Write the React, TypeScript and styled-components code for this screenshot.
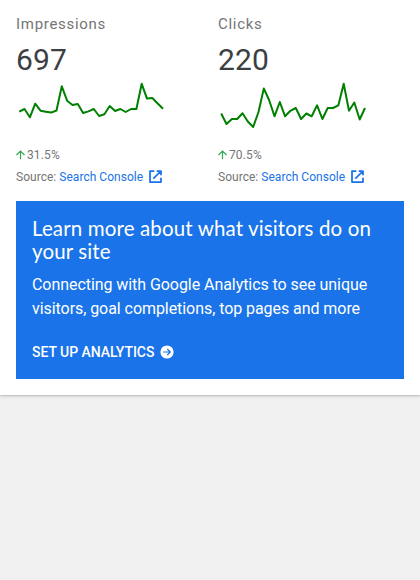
import React from 'react';
import styled, { createGlobalStyle } from 'styled-components';

const GlobalStyle = createGlobalStyle`
  body {
    margin: 0;
    background: #f0f0f0;
    font-family: Roboto, sans-serif;
  }
  *, *::before, *::after { box-sizing: border-box; }
`;

const Page = styled.div`
  min-height: 100vh;
  background: #f0f0f0;
`;

const Widget = styled.main`
  height: 395px;
  padding: 0 16px;
  background: #fff;
  box-shadow: 0 1px 0 rgba(0, 0, 0, 0.06), 0 1px 3px rgba(0, 0, 0, 0.2);
`;

const Metrics = styled.div`
  display: grid;
  grid-template-columns: 202px 1fr;
  height: 201px;
`;

const MetricColumn = styled.section`
  display: flex;
  flex-direction: column;
  padding-top: 14px;
  color: #757575;
`;

const MetricName = styled.h2`
  margin: 0;
  font-size: 15px;
  font-weight: 400;
  line-height: 20px;
  letter-spacing: 0.7px;
`;

const MetricValue = styled.div`
  margin-top: 9px;
  font-size: 30px;
  line-height: 33px;
  letter-spacing: 0.15px;
  color: #3c4043;
`;

const Sparkline = styled.svg`
  display: block;
  width: 150px;
  height: 54px;
`;

const Change = styled.div`
  display: flex;
  align-items: center;
  gap: 2px;
  margin-top: 17px;
  font-size: 12px;
  line-height: 16px;
  letter-spacing: 0.12px;
`;

const Source = styled.div`
  display: flex;
  align-items: center;
  margin-top: 5px;
  font-size: 12px;
  line-height: 16px;
  letter-spacing: 0.03px;
  white-space: pre;
`;

const SourceLink = styled.a`
  display: inline-flex;
  align-items: center;
  gap: 4px;
  color: #1a73e8;
  text-decoration: none;
`;

const Icon = styled.svg`
  display: block;
  flex: none;
  fill: currentColor;
`;

const Promo = styled.section`
  height: 178px;
  padding: 16px;
  background: #1a73e8;
  color: #fff;
`;

const PromoTitle = styled.h3`
  margin: 0;
  font-family: Lato, sans-serif;
  font-size: 20.5px;
  font-weight: 400;
  line-height: 23px;
  letter-spacing: 0.13px;
`;

const PromoText = styled.p`
  margin: 10px 0 0;
  font-size: 16px;
  line-height: 24px;
  letter-spacing: -0.06px;
  white-space: nowrap;
`;

const PromoAction = styled.a`
  display: flex;
  align-items: center;
  gap: 6px;
  margin-top: 22px;
  font-size: 14px;
  font-weight: 500;
  line-height: 18px;
  letter-spacing: -0.04px;
  color: #fff;
`;

interface Metric {
  name: string;
  value: string;
  change: string;
  series: number[];
}

const metrics: Metric[] = [
  {
    name: 'Impressions',
    value: '697',
    change: '31.5%',
    series: [35.7, 33, 41.3, 27.7, 34.7, 35.7, 36.6, 34.5, 10.3, 24.7, 29, 28, 37, 35.4, 33, 40, 38.2, 30, 35, 33, 36, 33, 33, 7.8, 22.6, 22, 27.5, 32.7],
  },
  {
    name: 'Clicks',
    value: '220',
    change: '70.5%',
    series: [37.5, 48, 43, 43, 37.3, 45.5, 51, 36, 12.5, 24, 40.3, 26, 40.3, 34.8, 32, 43, 37.5, 40.3, 29.3, 43, 32, 32, 29.3, 7.8, 34.8, 26.5, 43.5, 32],
  },
];

const STEP = 5.325;
const toPoints = (series: number[]) =>
  series.map((y, i) => `${(3.2 + i * STEP).toFixed(1)},${y}`).join(' ');

const MetricCard = ({ name, value, change, series }: Metric) => (
  <MetricColumn>
    <MetricName>{name}</MetricName>
    <MetricValue>{value}</MetricValue>
    <Sparkline viewBox="0 0 150 54">
      <polyline
        points={toPoints(series)}
        fill="none"
        stroke="#008000"
        strokeWidth="2"
        strokeLinejoin="round"
      />
    </Sparkline>
    <Change>
      <Icon width="9" height="10" viewBox="0 0 9 10">
        <path d="M4.5 9.3V1.2M.5 5l4-4 4 4" fill="none" stroke="#34a853" strokeWidth="1.2" />
      </Icon>
      {change}
    </Change>
    <Source>
      {'Source: '}
      <SourceLink>
        Search Console
        <Icon width="17" height="17" viewBox="0 0 17 17">
          <path d="M7.3 3H3v11h11V9.7M9.7 3H14v4.3M14 3L6.3 10.7" fill="none" stroke="currentColor" strokeWidth="1.75" strokeLinejoin="round" />
        </Icon>
      </SourceLink>
    </Source>
  </MetricColumn>
);

const App = () => (
  <Page>
    <GlobalStyle />
    <Widget>
      <Metrics>
        {metrics.map((m) => (
          <MetricCard key={m.name} {...m} />
        ))}
      </Metrics>
      <Promo>
        <PromoTitle>
          Learn more about what visitors do on
          <br />
          your site
        </PromoTitle>
        <PromoText>
          Connecting with Google Analytics to see unique
          <br />
          visitors, goal completions, top pages and more
        </PromoText>
        <PromoAction>
          SET UP ANALYTICS
          <Icon width="14" height="14" viewBox="0 0 14 14">
            <circle cx="7" cy="7" r="6.6" />
            <path d="M3.2 7h7M7.3 4l3 3-3 3" fill="none" stroke="#1a73e8" strokeWidth="1.2" />
          </Icon>
        </PromoAction>
      </Promo>
    </Widget>
  </Page>
);

export default App;
